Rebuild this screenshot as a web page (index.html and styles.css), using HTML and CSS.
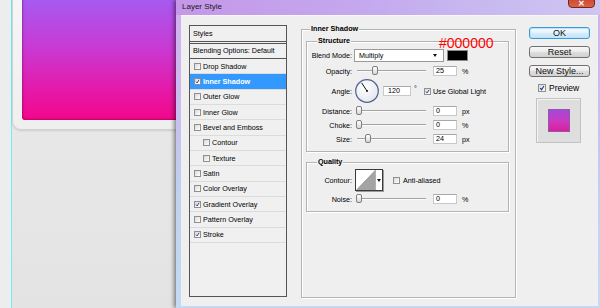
FILE: index.html
```html
<!DOCTYPE html>
<html lang="en">
<head>
    <meta charset="UTF-8">
    <meta name="viewport" content="width=device-width, initial-scale=1.0">
    <title>Layer Style</title>
    <link rel="stylesheet" href="styles.css">
</head>
<body>
<div class="desk">

    <!-- document canvas behind the dialog -->
    <div class="canvas">
        <div class="guide"></div>
        <div class="card"><div class="art"></div></div>
    </div>

    <div class="window">
        <div class="titlebar">
            <span class="title">Layer Style</span>
            <span class="close">✕</span>
        </div>

        <div class="client">
            <div class="styles">
                <div class="head">Styles</div>
                <div class="head blend">Blending Options: Default</div>
                <div class="item"><i class="cb"></i>Drop Shadow</div>
                <div class="item active"><i class="cb"><svg viewBox="0 0 7 7"><path d="M1.4 3.6 3 5.5 5.7 1.1"/></svg></i>Inner Shadow</div>
                <div class="item"><i class="cb"></i>Outer Glow</div>
                <div class="item"><i class="cb"></i>Inner Glow</div>
                <div class="item"><i class="cb"></i>Bevel and Emboss</div>
                <div class="item sub"><i class="cb"></i>Contour</div>
                <div class="item sub"><i class="cb"></i>Texture</div>
                <div class="item"><i class="cb"></i>Satin</div>
                <div class="item"><i class="cb"></i>Color Overlay</div>
                <div class="item"><i class="cb"><svg viewBox="0 0 7 7"><path d="M1.4 3.6 3 5.5 5.7 1.1"/></svg></i>Gradient Overlay</div>
                <div class="item"><i class="cb"></i>Pattern Overlay</div>
                <div class="item"><i class="cb"><svg viewBox="0 0 7 7"><path d="M1.4 3.6 3 5.5 5.7 1.1"/></svg></i>Stroke</div>
            </div>

            <div class="panel">
                <div class="legend">Inner Shadow</div>
                <div class="hex">#000000</div>

                <div class="group structure">
                    <div class="legend">Structure</div>
                    <div class="row blendrow">
                        <span class="lbl">Blend Mode:</span>
                        <span class="select">Multiply<i class="arrow"></i></span>
                        <span class="color"></span>
                    </div>
                    <div class="row opacity">
                        <span class="lbl">Opacity:</span>
                        <span class="slider"><i class="thumb" style="left:15px"></i></span>
                        <span class="field">25</span>
                        <span class="unit">%</span>
                    </div>
                    <div class="row anglerow">
                        <span class="lbl">Angle:</span>
                        <svg class="dial" viewBox="0 0 24 24">
                            <defs>
                                <radialGradient id="dialfill" cx="0.4" cy="0.35" r="0.7">
                                    <stop offset="0" stop-color="#ffffff"/>
                                    <stop offset="1" stop-color="#e4e6ec"/>
                                </radialGradient>
                            </defs>
                            <circle cx="12" cy="12" r="11.3" fill="url(#dialfill)" stroke="#4f6390" stroke-width="1.2"/>
                            <line x1="12" y1="12" x2="6.6" y2="3.8" stroke="#111" stroke-width="1"/>
                            <circle cx="12" cy="12" r="1" fill="#111"/>
                        </svg>
                        <span class="field wide">120</span>
                        <span class="deg">°</span>
                        <i class="cb"><svg viewBox="0 0 7 7"><path d="M1.4 3.6 3 5.5 5.7 1.1"/></svg></i>
                        <span class="check-lbl">Use Global Light</span>
                    </div>
                    <div class="row">
                        <span class="lbl">Distance:</span>
                        <span class="slider"><i class="thumb" style="left:-1px"></i></span>
                        <span class="field">0</span>
                        <span class="unit">px</span>
                    </div>
                    <div class="row">
                        <span class="lbl">Choke:</span>
                        <span class="slider"><i class="thumb" style="left:-1px"></i></span>
                        <span class="field">0</span>
                        <span class="unit">%</span>
                    </div>
                    <div class="row">
                        <span class="lbl">Size:</span>
                        <span class="slider"><i class="thumb" style="left:8px"></i></span>
                        <span class="field">24</span>
                        <span class="unit">px</span>
                    </div>
                </div>

                <div class="group quality">
                    <div class="legend">Quality</div>
                    <div class="row contourrow">
                        <span class="lbl">Contour:</span>
                        <span class="contour"><i class="curve"></i><i class="drop"><i class="arrow"></i></i></span>
                        <i class="cb aa"></i>
                        <span class="check-lbl">Anti-aliased</span>
                    </div>
                    <div class="row">
                        <span class="lbl">Noise:</span>
                        <span class="slider"><i class="thumb" style="left:-1px"></i></span>
                        <span class="field">0</span>
                        <span class="unit">%</span>
                    </div>
                </div>
            </div>

            <div class="buttons">
                <div class="btn ok">OK</div>
                <div class="btn">Reset</div>
                <div class="btn">New Style...</div>
                <div class="preview-row">
                    <i class="cb big"><svg viewBox="0 0 7 7"><path d="M1.4 3.6 3 5.5 5.7 1.1"/></svg></i>
                    <span>Preview</span>
                </div>
                <div class="preview"><div class="swatch"></div></div>
            </div>
        </div>
    </div>

</div>
</body>
</html>
```

FILE: styles.css
```css
* {
    box-sizing: border-box;
}
html, body {
    margin: 0;
    padding: 0;
}
body {
    width: 600px;
    height: 308px;
    overflow: hidden;
    font-family: "Liberation Sans", Arial, sans-serif;
    font-size: 7.2px;
    color: #000;
    background: #e6e6e6;
}
i {
    font-style: normal;
}
.desk {
    display: flex;
    height: 308px;
}

/* canvas */
.canvas {
    width: 176px;
    flex: none;
    display: flex;
    align-items: flex-start;
    overflow: hidden;
    background: linear-gradient(#ebebeb, #e3e3e3);
}
.guide {
    width: 12px;
    height: 100%;
    flex: none;
    background: #ededed;
    border-right: 1px solid #6cf0f2;
}
.card {
    flex: none;
    width: 210px;
    height: 151px;
    margin-top: -21px;
    padding: 0 0 9px 9px;
    border: 1px solid #d2d2d2;
    border-radius: 9px;
    background: linear-gradient(#f6f6f6, #efefef);
    box-shadow: 0 1px 2px rgba(0, 0, 0, 0.12);
}
.art {
    height: 100%;
    border-radius: 0 0 0 3px;
    background: linear-gradient(#9c62f4 0%, #a65af0 14%, #c83ad4 48%, #e41aaa 78%, #f2078a 100%);
    box-shadow: inset 1px -1px 2px rgba(70, 0, 40, 0.35);
}

/* window frame */
.window {
    flex: 1;
    display: flex;
    flex-direction: column;
    padding: 0 2px 2px 5px;
    background: linear-gradient(#d2aef0, #c9bdef 35%, #bfd3ef 65%, #c5daf2);
    box-shadow: -2px 0 4px rgba(0, 0, 0, 0.45);
}
.titlebar {
    height: 15px;
    flex: none;
    display: flex;
    align-items: flex-start;
    margin: 0 -2px 0 -5px;
    padding-left: 6px;
    background: linear-gradient(90deg, #c597e9, #c4a9ee 45%, #c9bdf0 80%, #cec5f1);
}
.title {
    font-size: 8px;
    line-height: 13px;
    color: #1a1a1a;
}
.close {
    margin-left: auto;
    margin-right: 5px;
    margin-top: -10px;
    width: 27px;
    height: 18px;
    border: 1px solid #7a2418;
    border-radius: 0 0 4px 4px;
    background: linear-gradient(#e9a495, #cd4a34 55%, #d9634a);
    color: #fff;
    font-size: 8px;
    font-weight: bold;
    line-height: 26px;
    text-align: center;
}
.client {
    flex: 1;
    display: flex;
    align-items: flex-start;
    background: #efefef;
    border-top: 1px solid #f8f8f8;
}

/* styles list */
.styles {
    width: 98px;
    height: 272px;
    margin: 9px 0 0 8px;
    border: 1px solid #555;
    background: #f0f0f0;
}
.head {
    height: 16px;
    line-height: 15px;
    padding-left: 3px;
    border-bottom: 1px solid #555;
}
.head.blend {
    margin-top: 1px;
    border-top: 1px solid #555;
    line-height: 14px;
}
.item {
    height: 15.35px;
    display: flex;
    align-items: center;
    padding-left: 4px;
    border-bottom: 1px solid #dcdcdc;
}
.item.sub {
    padding-left: 13px;
}
.item.active {
    background: #3399ff;
    color: #fff;
    font-weight: bold;
}
.cb {
    width: 7px;
    height: 7px;
    flex: none;
    margin-right: 2px;
    border: 1px solid #8e8f8f;
    background: linear-gradient(135deg, #d9d9d9, #ffffff);
    display: flex;
}
.cb svg {
    width: 100%;
    height: 100%;
    fill: none;
    stroke: #26388c;
    stroke-width: 1.3;
}

/* settings panel */
.panel {
    position: relative;
    display: flex;
    flex-direction: column;
    width: 215px;
    height: 269px;
    margin: 13px 0 0 14px;
    padding: 0 6px 0 4px;
    border: 1px solid #b4b4b4;
    box-shadow: 1px 1px 0 #fff, inset 1px 1px 0 #fff;
}
.legend {
    height: 10px;
    line-height: 10px;
    margin: -6px 0 0 8px;
    padding: 0 1px;
    align-self: flex-start;
    background: #efefef;
    font-weight: bold;
}
.panel > .legend {
    margin-left: 4px;
}
.hex {
    position: absolute;
    left: 137px;
    top: 6px;
    font-size: 14px;
    line-height: 14px;
    color: #f00;
    z-index: 1;
}
.group {
    display: flex;
    flex-direction: column;
    margin-top: 7px;
    border: 1px solid #b4b4b4;
    box-shadow: 1px 1px 0 #fff, inset 1px 1px 0 #fff;
}
.structure {
    height: 111px;
}
.quality {
    height: 50px;
    margin-top: 10px;
}
.group .legend {
    margin-left: 10px;
}
.row {
    height: 14px;
    display: flex;
    align-items: center;
}
.blendrow {
    margin-top: 2.5px;
}
.opacity {
    margin-top: 1.5px;
}
.anglerow {
    height: 26px;
}
.lbl {
    width: 45px;
    margin-right: 2px;
    text-align: right;
}
.select {
    width: 90px;
    height: 13px;
    display: flex;
    align-items: center;
    padding-left: 4px;
    border: 1px solid #9a9a9a;
    background: #fff;
}
.arrow {
    margin: 0 6px 0 auto;
    width: 0;
    height: 0;
    border-top: 3px solid #111;
    border-left: 2.5px solid transparent;
    border-right: 2.5px solid transparent;
}
.color {
    width: 21px;
    height: 11px;
    margin-left: 3px;
    border: 1px solid #8a8a8a;
    background: #000;
}
.slider {
    position: relative;
    width: 69px;
    height: 2px;
    margin-left: 3px;
    background: #a3a3a3;
    border-bottom: 1px solid #fafafa;
}
.thumb {
    position: absolute;
    top: -4px;
    width: 6px;
    height: 9px;
    border: 1px solid #7f7f7f;
    border-radius: 2px;
    background: linear-gradient(#ffffff, #d6d6d6);
}
.field {
    width: 24px;
    height: 10px;
    margin-left: 7px;
    padding-left: 2px;
    line-height: 8px;
    border: 1px solid #c9c9c9;
    border-top-color: #a8a8a8;
    background: #fff;
}
.field.wide {
    width: 28px;
    margin-left: 4px;
    padding-left: 4px;
}
.unit {
    margin-left: 5px;
}
.dial {
    width: 24px;
    height: 24px;
    margin-left: 1px;
}
.deg {
    margin-left: 3px;
    align-self: flex-start;
    margin-top: 6px;
}
.anglerow .cb {
    margin-left: 7px;
}
.contourrow {
    height: 22px;
    margin-top: 2px;
}
.contourrow + .row {
    margin-top: 1px;
}
.contour {
    width: 28px;
    height: 22px;
    margin-left: 1px;
    display: flex;
    border: 1px solid #3a3a3a;
    background: #fff;
    box-shadow: 1px 1px 0 #9a9a9a;
}
.curve {
    width: 20px;
    border-right: 1px solid #b0b0b0;
    background: linear-gradient(to bottom right, #fff 49%, #a4a4a4 51%);
}
.drop {
    flex: 1;
    display: flex;
    align-items: center;
    justify-content: center;
}
.drop .arrow {
    margin: 0;
}
.cb.aa {
    margin-left: 10px;
    margin-right: 3px;
}

/* buttons */
.buttons {
    width: 61px;
    margin: 11px 0 0 13px;
    display: flex;
    flex-direction: column;
}
.btn {
    height: 12px;
    margin-bottom: 7px;
    border: 1px solid #707070;
    border-radius: 3px;
    background: linear-gradient(#f7f7f7, #ebebeb 48%, #dddddd 52%, #d2d2d2);
    font-size: 9px;
    line-height: 10px;
    text-align: center;
    color: #111;
}
.btn.ok {
    border-color: #3b9bd8;
    background: linear-gradient(#f4fafe, #e6f3fc 48%, #d5ebfa 52%, #c8e4f8);
    box-shadow: inset 0 0 0 1px #bfe4f8;
}
.preview-row {
    height: 12px;
    display: flex;
    align-items: center;
    margin: -2px 0 0 9px;
    font-size: 8.5px;
}
.cb.big {
    width: 8px;
    height: 8px;
    margin-right: 3px;
}
.preview {
    width: 45px;
    height: 45px;
    margin: 4px 0 0 7px;
    display: flex;
    align-items: center;
    justify-content: center;
    border: 1px solid #c2c2c2;
    background: #dedede;
    box-shadow: inset 1px 1px 0 #f4f4f4;
}
.swatch {
    width: 22px;
    height: 23px;
    border: 1px solid #8d5aa8;
    background: linear-gradient(#a548d8, #c83ac0 50%, #e01e9c);
}
```
